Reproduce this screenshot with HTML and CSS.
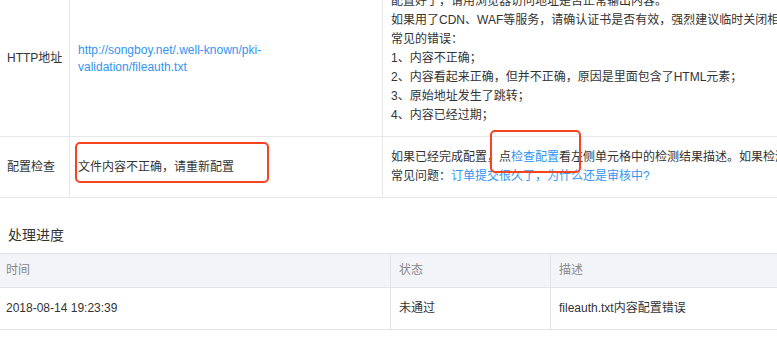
FILE: index.html
```html
<!DOCTYPE html>
<html lang="zh-CN">
<head>
    <meta charset="UTF-8">
    <meta name="viewport" content="width=device-width, initial-scale=1.0">
    <title>证书验证</title>
    <link rel="stylesheet" href="styles.css">
</head>
<body>

    <div class="page">
        <!-- Verify table, page is scrolled so the top is cut off -->
        <div class="info-table">
            <div class="cell label">HTTP地址</div>
            <div class="cell value">
                <a class="link" href="#">http://songboy.net/.well-known/pki-<br>validation/fileauth.txt</a>
            </div>
            <div class="cell note">
                <div class="line">配置好了，请用浏览器访问地址是否正常输出内容。</div>
                <div class="line">如果用了CDN、WAF等服务，请确认证书是否有效，强烈建议临时关闭相关服务后再进行验证。</div>
                <div class="line">常见的错误：</div>
                <div class="line">1、内容不正确；</div>
                <div class="line">2、内容看起来正确，但并不正确，原因是里面包含了HTML元素；</div>
                <div class="line">3、原始地址发生了跳转；</div>
                <div class="line">4、内容已经过期；</div>
            </div>

            <div class="cell label">配置检查</div>
            <div class="cell value">
                <span>文件内容不正确，请重新配置</span>
                <span class="mark mark-result"></span>
            </div>
            <div class="cell note">
                <div class="line">如果已经完成配置，点<a class="link" href="#">检查配置</a>看左侧单元格中的检测结果描述。如果检测通过，请等待审核。</div>
                <div class="line">常见问题：<a class="link" href="#">订单提交很久了，为什么还是审核中?</a></div>
                <span class="mark mark-check"></span>
            </div>
        </div>

        <!-- Progress log -->
        <h3 class="section-title">处理进度</h3>
        <div class="log-table">
            <div class="log-head">时间</div>
            <div class="log-head">状态</div>
            <div class="log-head">描述</div>

            <div class="log-cell">2018-08-14 19:23:39</div>
            <div class="log-cell">未通过</div>
            <div class="log-cell">fileauth.txt内容配置错误</div>
        </div>
    </div>

</body>
</html>
```

FILE: styles.css
```css
/* Basic page styling */
body {
    margin: 0;
    background-color: #fff;
    color: #333;
    font-family: "Liberation Sans", "Noto Sans CJK SC", sans-serif;
    font-size: 12px;
    overflow: hidden;
}

.page {
    width: 1100px;
    margin-top: -19px;
}

/* Top verify table */
.info-table {
    display: grid;
    grid-template-columns: 70px 313px 700px;
}

.cell {
    position: relative;
    display: flex;
    flex-direction: column;
    justify-content: center;
    padding: 11px 8px;
    line-height: 19px;
    border-right: 1px solid #e6e8ec;
    border-bottom: 1px solid #e6e8ec;
}

.cell.label {
    padding-left: 7px;
    padding-right: 0;
    white-space: nowrap;
}

.line {
    white-space: nowrap;
}

.link {
    color: #3194f2;
    text-decoration: none;
}

.cell.value .link {
    line-height: 17px;
}

/* Red highlight boxes drawn over the table */
.mark {
    position: absolute;
    box-sizing: border-box;
    border: 2px solid #f7431f;
    border-radius: 5px;
    z-index: 1;
}

.mark-result {
    left: 5px;
    top: 5px;
    width: 194px;
    height: 41px;
}

.mark-check {
    left: 107px;
    top: -7px;
    width: 91px;
    height: 43px;
}

/* Progress section */
.section-title {
    margin: 27px 0 8px 8px;
    font-size: 14px;
    font-weight: normal;
    line-height: 20px;
}

.log-table {
    display: grid;
    grid-template-columns: 391px 160px 549px;
    border-top: 1px solid #e0e3e8;
}

.log-head,
.log-cell {
    padding: 0 8px;
    border-right: 1px solid #e0e3e8;
    border-bottom: 1px solid #e0e3e8;
}

.log-head {
    line-height: 33px;
    background-color: #f3f4f8;
    color: #888;
}

.log-cell {
    line-height: 41px;
}

.log-head:first-child,
.log-cell:nth-child(4) {
    padding-left: 6px;
}
```
